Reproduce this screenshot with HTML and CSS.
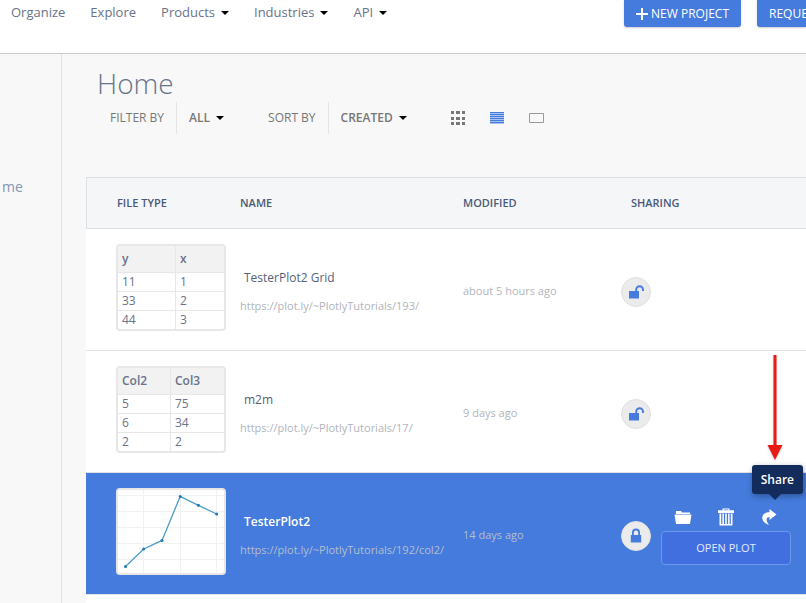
FILE: index.html
```html
<!DOCTYPE html>
<html lang="en">
<head>
<meta charset="utf-8">
<title>Home</title>
<link rel="stylesheet" href="styles.css">
</head>
<body>
<header class="topbar">
  <nav class="nav">
    <a href="#">Organize</a>
    <a href="#">Explore</a>
    <a href="#" class="has-menu">Products</a>
    <a href="#" class="has-menu">Industries</a>
    <a href="#" class="has-menu">API</a>
  </nav>
  <div class="topbar-actions">
    <button class="primary" type="button"><svg width="12" height="12" viewBox="0 0 12 12" aria-hidden="true"><path d="M5 0h2v5h5v2H7v5H5V7H0V5h5z" fill="#fff"/></svg>NEW PROJECT</button>
    <button class="primary primary-last" type="button">REQUE</button>
  </div>
</header>
<div class="layout">
  <aside class="sidebar"><a href="#">me</a></aside>
  <main class="main">
    <h1>Home</h1>
    <div class="filters">
      <div class="filter"><span class="filter-label">FILTER BY</span><button type="button" class="filter-value has-menu">ALL</button></div>
      <div class="filter filter-sort"><span class="filter-label">SORT BY</span><button type="button" class="filter-value has-menu">CREATED</button></div>
      <div class="views">
        <button type="button" aria-label="Grid view"><svg width="14" height="14" viewBox="0 0 14 14" fill="#777"><path d="M0 0h3v3H0zM5 0h4v3H5zM11 0h3v3h-3zM0 6h3v3H0zM5 6h4v3H5zM11 6h3v3h-3zM0 11h3v3H0zM5 11h4v3H5zM11 11h3v3h-3z"/></svg></button>
        <button type="button" aria-label="List view"><svg width="14" height="14" viewBox="0 0 14 14"><path d="M0 1h14v12H0z" fill="#a9c1ef"/><path d="M0 1h14v1H0zM0 3h14v1H0zM0 5h14v1H0zM0 7h14v1H0zM0 9h14v1H0zM0 11h14v1H0z" fill="#447bdc"/></svg></button>
        <button type="button" aria-label="Large view"><svg width="15" height="12" viewBox="0 0 15 12"><path d="M.5 1.500h14v9H.5z" fill="none" stroke="#999"/></svg></button>
      </div>
    </div>
    <div class="files-panel">
    <table class="files">
      <colgroup><col class="c-type"><col class="c-name"><col class="c-mod"><col class="c-share"><col></colgroup>
      <thead>
        <tr><th class="type">FILE TYPE</th><th>NAME</th><th>MODIFIED</th><th class="sharing" colspan="2">SHARING</th></tr>
      </thead>
      <tbody>
        <tr>
          <td class="type">
            <div class="thumb"><table class="mini"><colgroup><col class="wide"><col></colgroup>
              <tr><th>y</th><th>x</th></tr><tr><td>11</td><td>1</td></tr><tr><td>33</td><td>2</td></tr><tr><td>44</td><td>3</td></tr>
            </table></div>
          </td>
          <td class="name"><a class="title" href="#">TesterPlot2 Grid</a><a class="url" href="#">https://plot.ly/~PlotlyTutorials/193/</a></td>
          <td class="modified">about 5 hours ago</td>
          <td class="lock"><span class="badge"><svg width="16" height="14" viewBox="0 0 16 14" aria-hidden="true"><path d="M1 6h10v7.500H1z" fill="#447bdc"/><path d="M8.200 6V4.600a3.400 3.400 0 0 1 6.800 0v1.400" fill="none" stroke="#447bdc" stroke-width="1.900"/></svg></span></td>
          <td></td>
        </tr>
        <tr>
          <td class="type">
            <div class="thumb"><table class="mini"><colgroup><col class="even"><col></colgroup>
              <tr><th>Col2</th><th>Col3</th></tr><tr><td>5</td><td>75</td></tr><tr><td>6</td><td>34</td></tr><tr><td>2</td><td>2</td></tr>
            </table></div>
          </td>
          <td class="name"><a class="title" href="#">m2m</a><a class="url" href="#">https://plot.ly/~PlotlyTutorials/17/</a></td>
          <td class="modified">9 days ago</td>
          <td class="lock"><span class="badge"><svg width="16" height="14" viewBox="0 0 16 14" aria-hidden="true"><path d="M1 6h10v7.500H1z" fill="#447bdc"/><path d="M8.200 6V4.600a3.400 3.400 0 0 1 6.800 0v1.400" fill="none" stroke="#447bdc" stroke-width="1.900"/></svg></span></td>
          <td></td>
        </tr>
        <tr class="selected">
          <td class="type">
            <div class="thumb"><svg width="106" height="83" viewBox="0 0 106 83" aria-hidden="true">
              <path d="M0 5.500h106M0 21.500h106M0 37.500h106M0 53.500h106M0 69.500h106M25.500 0v83M62.500 0v83M98.500 0v83" stroke="#f1f1f1"/>
              <path d="M7.500 76.500L25.700 59l18.300-8.600L62.200 6.500l18.200 8.800 18.200 8.700" fill="none" stroke="#4c9bc9" stroke-width="1.300"/>
              <g fill="#1f77b4"><circle cx="7.500" cy="76.500" r="1.500"/><circle cx="25.700" cy="59" r="1.500"/><circle cx="44" cy="50.400" r="1.500"/><circle cx="62.200" cy="6.500" r="1.500"/><circle cx="80.400" cy="15.300" r="1.500"/><circle cx="98.600" cy="24" r="1.500"/></g>
            </svg></div>
          </td>
          <td class="name"><a class="title" href="#">TesterPlot2</a><a class="url" href="#">https://plot.ly/~PlotlyTutorials/192/col2/</a></td>
          <td class="modified">14 days ago</td>
          <td class="lock"><span class="badge"><svg width="12" height="16" viewBox="0 0 12 16" aria-hidden="true"><path d="M.8 7h10.400v7.500H.8z" fill="#447bdc"/><path d="M2.900 7.500V4.600a3.100 3.100 0 0 1 6.200 0v2.900" fill="none" stroke="#447bdc" stroke-width="1.800"/></svg></span></td>
          <td class="actions">
            <div class="action-box">
              <div class="icons">
                <button type="button" aria-label="Move to folder"><svg width="18" height="18" viewBox="0 0 18 18" fill="#fff"><path d="M2 3h5l1 1.500h8V6H2zM.5 6.500h17L16 16H2z"/></svg></button>
                <button type="button" aria-label="Delete"><svg width="18" height="18" viewBox="0 0 18 18" fill="#fff"><path d="M5.500 2.500V.5h7v2h-1.300v-1H6.800v1z"/><path d="M1 2.300h16v2.700H1zM2.500 5.500h1.700V16h9.600V5.500h1.700V17.500h-13z"/><path d="M5.400 5.500h1.500V17H5.400zM8.200 5.500h1.600V17H8.200zM11.100 5.500h1.500V17h-1.500z"/></svg></button>
                <button type="button" aria-label="Share"><svg width="18" height="18" viewBox="0 0 18 18" fill="#fff"><path d="M9.500 1l7 5.500-7 5.500V9C6 9 5.500 12 9 17 4.500 15.500 2 12.500 2.300 9.500 2.700 6 5.500 4.200 9.500 4.200z"/></svg></button>
              </div>
              <button class="open" type="button">OPEN PLOT</button>
              <div class="callout">
                <svg width="24" height="110" viewBox="0 0 24 110" aria-hidden="true"><path d="M10.500 0h3v90h6L12 105 4.500 90h6z" fill="#e81c14"/></svg>
                <div class="tooltip" role="tooltip">Share</div>
              </div>
            </div>
          </td>
        </tr>
      </tbody>
    </table>
    </div>
  </main>
</div>
</body>
</html>
```

FILE: styles.css
```css
* { box-sizing: border-box; }

body {
  margin: 0;
  min-height: 100vh;
  display: flex;
  flex-direction: column;
  background: #f8f8f8;
  color: #69738a;
  font: 12px/18px "Open Sans", sans-serif;
  overflow: hidden;
}

a { color: inherit; text-decoration: none; }
button { font: inherit; color: inherit; background: none; border: 0; padding: 0; }
svg { display: block; }

.topbar {
  display: flex;
  justify-content: space-between;
  height: 54px;
  padding-left: 11px;
  background: #fff;
  border-bottom: 1px solid #c8cccc;
}

.nav { display: flex; gap: 25px; font-size: 13px; line-height: 24px; }

.has-menu::after {
  content: "";
  display: inline-block;
  margin-left: 6px;
  vertical-align: 2px;
  border: 4px solid transparent;
  border-top-color: #000;
  border-bottom: 0;
}

.topbar-actions { display: flex; gap: 16px; align-items: flex-start; }

.primary {
  display: flex;
  align-items: center;
  gap: 3px;
  height: 27px;
  padding: 0 12px;
  color: #fff;
  background: #447bdc;
  border-radius: 0 0 3px 3px;
  box-shadow: 0 1px 2px #0003;
}
.primary-last { width: 49px; padding-right: 0; border-radius: 0 0 0 3px; }

.layout { display: flex; flex: 1; }

.sidebar {
  width: 62px;
  padding: 124px 2px 0;
  border-right: 1px solid #e2e2e2;
  color: #8495b3;
  font-size: 14px;
}

.main { flex: 1; min-width: 0; display: flex; flex-direction: column; padding-left: 24px; }

h1 {
  margin: 11px 0 1px 11px;
  font-size: 28px;
  line-height: 36px;
  font-weight: 300;
}

.filters { display: flex; align-items: center; height: 32px; margin: 0 0 43px 24px; color: #777; }
.filter { display: flex; align-items: stretch; line-height: 32px; }
.filter-label { padding-right: 12px; border-right: 1px solid #e4e4e4; }
.filter-value { padding-left: 12px; font-weight: 600; }
.filter-sort { margin-left: 44px; }
.views { display: flex; align-items: center; gap: 25px; margin-left: 44px; }

.files-panel { flex: 1; background: #fff; }

table { border-collapse: separate; border-spacing: 0; table-layout: fixed; width: 100%; }
th, td { padding: 0; text-align: left; vertical-align: top; }

.c-type { width: 154px; }
.c-name { width: 223px; }
.c-mod { width: 158px; }
.c-share { width: 40px; }

.files > thead th {
  height: 52px;
  vertical-align: middle;
  font-size: 11px;
  font-weight: 600;
  color: #4c5a78;
  background: #f4f6f8;
  border: solid #dcdfe3;
  border-width: 1px 0;
}
.files > thead .type { border-left-width: 1px; padding-left: 30px; }
.files > thead .sharing { padding-left: 10px; }

.files > tbody > tr > td { height: 122px; border-bottom: 1px solid #dfe1e4; }
.files > tbody .type { padding: 15px 14px 0 30px; }
.files .name { padding-top: 40px; white-space: nowrap; }
.title, .url { display: block; }
.title { margin-left: 4px; color: #566178; }
.url { margin-top: 10px; }
.url, .modified { font-size: 11px; color: #b0b4bd; }
.files .modified { padding-top: 53px; }
.files .lock { padding-top: 48px; }

.badge {
  display: flex;
  align-items: center;
  justify-content: center;
  width: 30px;
  height: 30px;
  border: 1px solid #e0e0e0;
  border-radius: 50%;
  background: #ebebeb;
}

.thumb { height: 87px; border: 2px solid #e7e7e7; border-radius: 4px; background: #fff; overflow: hidden; }
.mini th, .mini td { padding-left: 4px; border-bottom: 1px solid #e7e7e7; line-height: 18px; }
.mini th { line-height: 26px; font-weight: 600; background: #f2f2f2; }
.mini tr > :first-child { border-right: 1px solid #e7e7e7; }
.mini tr:last-child td { border-bottom: 0; }
.wide { width: 58px; }
.even { width: 53px; }

.selected { background: #447bdc; }
.selected .title { color: #fff; font-weight: 600; }
.selected .url, .selected .modified { color: #b4bfcc; }
.files .actions { padding: 35px 15px 0 0; }
.action-box { position: relative; }
.icons { display: flex; align-items: flex-start; gap: 25px; padding: 0 13px; height: 23px; }
.open {
  width: 100%;
  height: 34px;
  font-size: 11px;
  color: #e4ebfb;
  background: #426fe0;
  border: 1px solid #6c98ea;
  border-radius: 4px;
}

.callout {
  position: absolute;
  right: -12px;
  bottom: 71px;
}
.callout svg { margin-left: 11px; filter: drop-shadow(0 1px 1px #0003); }
.tooltip {
  position: relative;
  padding: 0 9px;
  line-height: 29px;
  font-weight: 600;
  color: #fff;
  background: #142c5c;
  border-radius: 3px;
  box-shadow: 1px 2px 6px #0005;
}
.tooltip::after {
  content: "";
  position: absolute;
  top: 100%;
  left: 17px;
  border: 6px solid transparent;
  border-top-color: #142c5c;
  border-bottom: 0;
}
```
